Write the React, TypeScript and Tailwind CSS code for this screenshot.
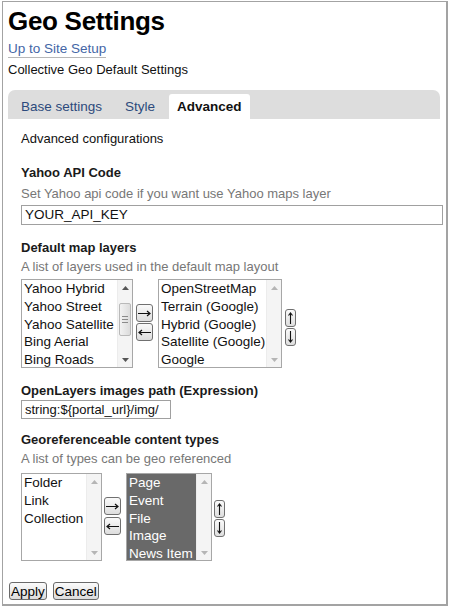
import React from 'react'

const FONT = { fontFamily: '"Liberation Sans", Arial, sans-serif' }

type ListProps = {
  items: string[]
  width: number
  height: number
  selected?: boolean
  thumb?: boolean
}

const Triangle: React.FC<{ up?: boolean; color: string }> = ({ up, color }) => (
  <svg width="7" height="4" viewBox="0 0 7 4">
    <path d={up ? 'M0 4 L3.5 0 L7 4 Z' : 'M0 0 L3.5 4 L7 0 Z'} fill={color} />
  </svg>
)

const ScrollBar: React.FC<{ thumb?: boolean }> = ({ thumb }) => {
  const arrow = thumb ? '#555' : '#b5b5b5'
  return (
    <div className="flex w-[15px] shrink-0 flex-col items-center border-l border-[#ececec] bg-[#f4f4f4]">
      <div className="flex h-[15px] w-full items-center justify-center">
        <Triangle up color={arrow} />
      </div>
      <div className="flex-1 w-full px-[1px]">
        {thumb && (
          <div className="mt-[8px] flex h-[33px] w-full flex-col items-center justify-center gap-[2px] rounded-[2px] border border-[#b9b9b9] bg-gradient-to-r from-[#f2f2f2] to-[#dcdcdc]">
            <div className="h-px w-[6px] bg-[#8a8a8a]" />
            <div className="h-px w-[6px] bg-[#8a8a8a]" />
            <div className="h-px w-[6px] bg-[#8a8a8a]" />
          </div>
        )}
      </div>
      <div className="flex h-[15px] w-full items-center justify-center">
        <Triangle color={arrow} />
      </div>
    </div>
  )
}

const ListBox: React.FC<ListProps> = ({ items, width, height, selected, thumb }) => (
  <div className="flex shrink-0 border border-[#a7a7a7] bg-white" style={{ width, height }}>
    <div className={`flex-1 overflow-hidden ${selected ? 'bg-[#696969] text-white' : 'text-[#111]'}`}>
      {items.map((item) => (
        <div key={item} className="whitespace-nowrap pl-[2px] text-[13.5px] leading-[17.75px]">
          {item}
        </div>
      ))}
    </div>
    <ScrollBar thumb={thumb} />
  </div>
)

const MoveButton: React.FC<{ dir: 'right' | 'left' }> = ({ dir }) => (
  <div className="flex h-[18px] w-[17px] items-center justify-center rounded-[3px] border border-[#707070] bg-gradient-to-b from-[#fafafa] to-[#dedede]">
    <svg width="13" height="7" viewBox="0 0 13 7">
      {dir === 'right' ? (
        <path d="M0 3.5 H12 M9 1 L12 3.5 L9 6" stroke="#111" strokeWidth="1.2" fill="none" />
      ) : (
        <path d="M13 3.5 H1 M4 1 L1 3.5 L4 6" stroke="#111" strokeWidth="1.2" fill="none" />
      )}
    </svg>
  </div>
)

const OrderButton: React.FC<{ dir: 'up' | 'down' }> = ({ dir }) => (
  <div className="flex h-[18px] w-[11px] items-center justify-center rounded-[3px] border border-[#707070] bg-gradient-to-b from-[#fafafa] to-[#dedede]">
    <svg width="5" height="12" viewBox="0 0 5 12">
      {dir === 'up' ? (
        <path d="M2.5 12 V1 M0.5 3.5 L2.5 1 L4.5 3.5" stroke="#111" strokeWidth="1.1" fill="none" />
      ) : (
        <path d="M2.5 0 V11 M0.5 8.5 L2.5 11 L4.5 8.5" stroke="#111" strokeWidth="1.1" fill="none" />
      )}
    </svg>
  </div>
)

const Label: React.FC<{ children: React.ReactNode; className?: string }> = ({ children, className }) => (
  <div className={`text-[13px] font-bold leading-[16px] text-[#1a1a1a] ${className ?? ''}`}>{children}</div>
)

const Help: React.FC<{ children: React.ReactNode; className?: string }> = ({ children, className }) => (
  <div className={`text-[13px] leading-[16px] text-[#777] ${className ?? ''}`}>{children}</div>
)

export default function App() {
  return (
    <div className="h-[608px] w-[450px] bg-white pl-[2px] pt-[1px]" style={FONT}>
      <div className="h-[605px] w-[446px] border border-r-2 border-b-2 border-[#a3a3a3] pl-[5px] pt-[4px]">
        <h1 className="text-[26px] font-bold leading-[30px] tracking-[-0.3px] text-black">Geo Settings</h1>

        <a className="mt-[4px] inline-block border-b border-[#b8b8b8] text-[13.5px] leading-[17px] text-[#4466a6]">
          Up to Site Setup
        </a>
        <div className="mt-[2px] text-[13px] leading-[16px] text-[#111]">Collective Geo Default Settings</div>

        <div className="mt-[12px] flex h-[29px] w-[432px] items-end rounded-t-[7px] bg-[#dddddd] pl-[13px] text-[13.5px]">
          <div className="h-[25px] leading-[25px] text-[#2c4a7c]">Base settings</div>
          <div className="ml-[23px] h-[25px] leading-[25px] text-[#2c4a7c]">Style</div>
          <div className="ml-[14px] h-[25px] rounded-t-[3px] bg-white px-[8px] font-bold leading-[25px] text-[#111]">
            Advanced
          </div>
        </div>

        <div className="pl-[13px]">
          <div className="mt-[12px] text-[13px] leading-[16px] text-[#111]">Advanced configurations</div>

          <Label className="mt-[18px]">Yahoo API Code</Label>
          <Help className="mt-[5px]">Set Yahoo api code if you want use Yahoo maps layer</Help>
          <div className="mt-[3px] h-[20px] w-[422px] border border-[#a0a0a0] pl-[3px] text-[13.5px] leading-[18px] text-[#111]">
            YOUR_API_KEY
          </div>

          <Label className="mt-[15px]">Default map layers</Label>
          <Help className="mt-[3px]">A list of layers used in the default map layout</Help>
          <div className="mt-[4px] flex items-start">
            <ListBox
              items={['Yahoo Hybrid', 'Yahoo Street', 'Yahoo Satellite', 'Bing Aerial', 'Bing Roads']}
              width={112}
              height={89}
              thumb
            />
            <div className="ml-[3px] mt-[25px] flex flex-col gap-[1px]">
              <MoveButton dir="right" />
              <MoveButton dir="left" />
            </div>
            <div className="ml-[5px]">
              <ListBox
                items={['OpenStreetMap', 'Terrain (Google)', 'Hybrid (Google)', 'Satellite (Google)', 'Google']}
                width={124}
                height={89}
              />
            </div>
            <div className="ml-[3px] mt-[30px] flex flex-col gap-[1px]">
              <OrderButton dir="up" />
              <OrderButton dir="down" />
            </div>
          </div>

          <Label className="mt-[15px]">OpenLayers images path (Expression)</Label>
          <div className="mt-[1px] h-[19px] w-[150px] border border-[#a0a0a0] pl-[3px] text-[13px] leading-[17px] text-[#111]">
            string:${'{'}portal_url{'}'}/img/
          </div>

          <Label className="mt-[13px]">Georeferenceable content types</Label>
          <Help className="mt-[3px]">A list of types can be geo referenced</Help>
          <div className="mt-[6px] flex items-start">
            <ListBox items={['Folder', 'Link', 'Collection']} width={81} height={88} />
            <div className="ml-[2px] mt-[24px] flex flex-col gap-[2px]">
              <MoveButton dir="right" />
              <MoveButton dir="left" />
            </div>
            <div className="ml-[5px]">
              <ListBox items={['Page', 'Event', 'File', 'Image', 'News Item']} width={86} height={88} selected />
            </div>
            <div className="ml-[2px] mt-[27px] flex flex-col gap-[1px]">
              <OrderButton dir="up" />
              <OrderButton dir="down" />
            </div>
          </div>
        </div>

        <div className="ml-[1px] mt-[21px] flex gap-[6px]">
          <button className="h-[18px] rounded-[3px] border border-[#6a6a6a] bg-gradient-to-b from-[#fbfbfb] to-[#dcdcdc] px-[1px] text-[13.5px] leading-[15px] text-black">
            Apply
          </button>
          <button className="h-[18px] rounded-[3px] border border-[#6a6a6a] bg-gradient-to-b from-[#fbfbfb] to-[#dcdcdc] px-[1px] text-[13.5px] leading-[15px] text-black">
            Cancel
          </button>
        </div>
      </div>
    </div>
  )
}
